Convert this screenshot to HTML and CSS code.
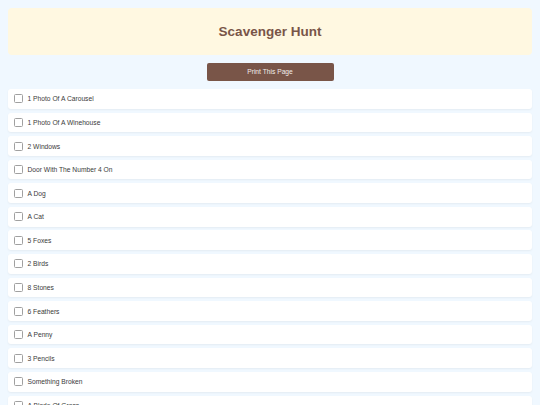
FILE: index.html
```html
<!DOCTYPE html>
<html lang="en">
<head>
    <meta charset="UTF-8">
    <meta name="viewport" content="width=device-width, initial-scale=1.0">
    <title>Scavenger Hunt</title>
    <link rel="stylesheet" href="styles.css">
</head>
<body>
    <div class="header">
        <h1>Scavenger Hunt</h1>
    </div>

    <div class="print-row">
        <button class="print-btn">Print This Page</button>
    </div>

    <ul class="hunt-list">
        <li class="hunt-item"><label><input type="checkbox"> 1 Photo Of A Carousel</label></li>
        <li class="hunt-item"><label><input type="checkbox"> 1 Photo Of A Winehouse</label></li>
        <li class="hunt-item"><label><input type="checkbox"> 2 Windows</label></li>
        <li class="hunt-item"><label><input type="checkbox"> Door With The Number 4 On</label></li>
        <li class="hunt-item"><label><input type="checkbox"> A Dog</label></li>
        <li class="hunt-item"><label><input type="checkbox"> A Cat</label></li>
        <li class="hunt-item"><label><input type="checkbox"> 5 Foxes</label></li>
        <li class="hunt-item"><label><input type="checkbox"> 2 Birds</label></li>
        <li class="hunt-item"><label><input type="checkbox"> 8 Stones</label></li>
        <li class="hunt-item"><label><input type="checkbox"> 6 Feathers</label></li>
        <li class="hunt-item"><label><input type="checkbox"> A Penny</label></li>
        <li class="hunt-item"><label><input type="checkbox"> 3 Pencils</label></li>
        <li class="hunt-item"><label><input type="checkbox"> Something Broken</label></li>
        <li class="hunt-item"><label><input type="checkbox"> A Blade Of Grass</label></li>
    </ul>
</body>
</html>
```

FILE: styles.css
```css
:root {
    --bg-page: #f0f8ff;
    --bg-header: #fff8e1;
    --brown: #795548;
}

body {
    background-color: var(--bg-page);
    font-family: "Liberation Sans", Arial, sans-serif;
    margin: 0;
    padding: 8px;
}

.header {
    background-color: var(--bg-header);
    border-radius: 4px;
    height: 47px;
    display: flex;
    justify-content: center;
    align-items: center;
}

.header h1 {
    margin: 0;
    font-size: 13.5px;
    font-weight: bold;
    color: var(--brown);
}

.print-row {
    display: flex;
    justify-content: center;
    margin: 8px 0 8.5px;
}

.print-btn {
    width: 127px;
    height: 17.5px;
    padding: 0;
    background-color: var(--brown);
    color: #f2ece9;
    border: none;
    border-radius: 2px;
    font-family: inherit;
    font-size: 6.7px;
}

.hunt-list {
    list-style: none;
    margin: 0;
    padding: 0;
    display: flex;
    flex-direction: column;
    gap: 3.9px;
}

.hunt-item {
    background-color: #fff;
    border-radius: 3px;
    height: 19.7px;
    box-shadow: 0 1px 2px rgba(0, 0, 0, 0.05);
    display: flex;
    align-items: center;
    padding-left: 6px;
    font-size: 6.7px;
    color: #3a3a3a;
}

.hunt-item label {
    display: flex;
    align-items: center;
    gap: 4.5px;
}

.hunt-item input {
    appearance: none;
    -webkit-appearance: none;
    box-sizing: border-box;
    margin: 0;
    width: 9px;
    height: 9px;
    border: 1px solid #a0a0a0;
    border-radius: 1.5px;
    background: #fff;
}
```
